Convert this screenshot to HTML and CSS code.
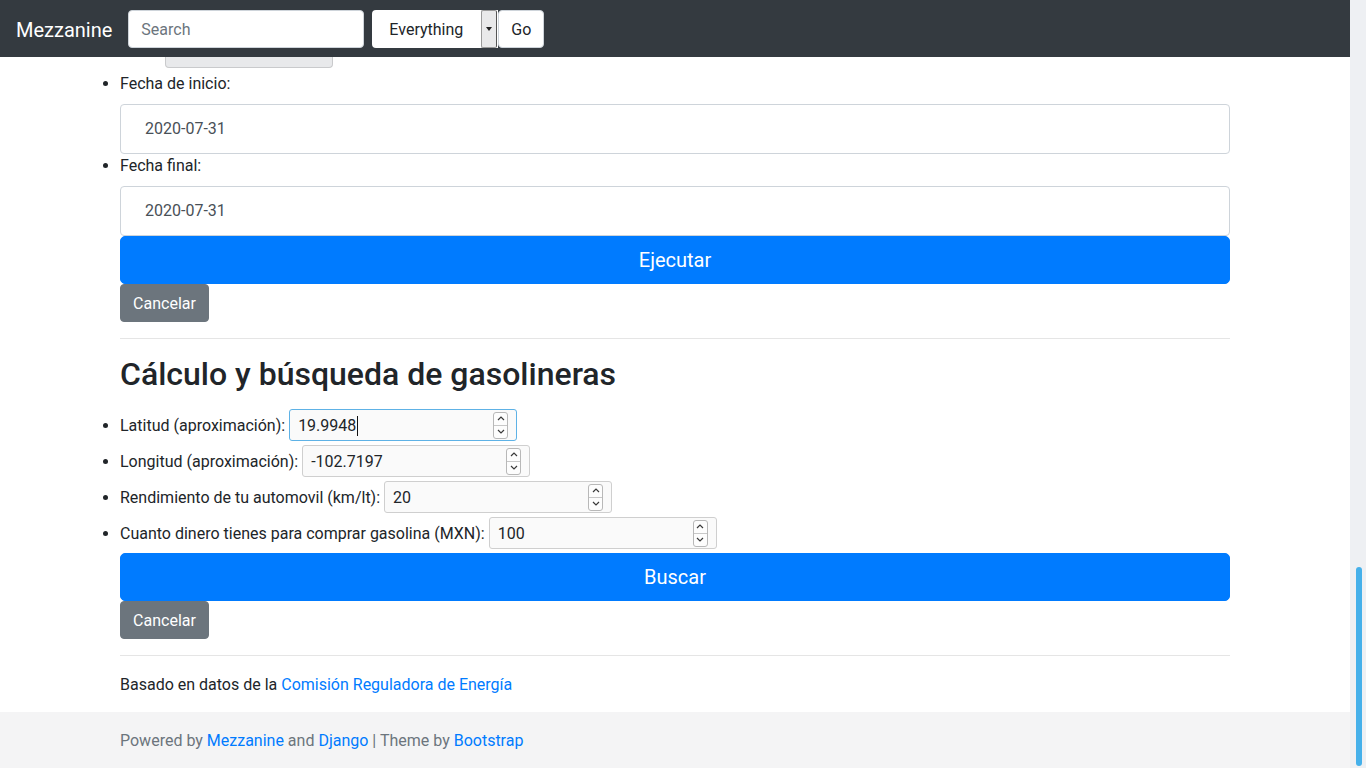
FILE: index.html
```html
<!DOCTYPE html>
<html lang="es">
<head>
<meta charset="utf-8">
<title>Mezzanine</title>
<link rel="stylesheet" href="styles.css">
</head>
<body>
<div class="viewport">
  <div class="main">
    <nav class="navbar">
      <span class="brand">Mezzanine</span>
      <input class="nav-search" type="text" placeholder="Search">
      <div class="nav-select">
        <span class="nav-select-text">Everything</span>
        <span class="nav-select-arrow"><svg width="6" height="4" viewBox="0 0 6 4"><path d="M0 0h6L3 4z" fill="#222"/></svg></span>
      </div>
      <button class="nav-go">Go</button>
    </nav>

    <div class="container">
      <div class="top-btn-row"><button class="btn-gray-partial"></button></div>

      <ul class="form-list dates">
        <li>
          <label class="lbl">Fecha de inicio:</label>
          <div class="date-input">2020-07-31</div>
        </li>
        <li>
          <label class="lbl">Fecha final:</label>
          <div class="date-input">2020-07-31</div>
        </li>
      </ul>
      <button class="btn btn-primary btn-lg">Ejecutar</button>
      <button class="btn btn-secondary">Cancelar</button>

      <hr>

      <h2>Cálculo y búsqueda de gasolineras</h2>

      <ul class="form-list numbers">
        <li>
          <div class="field">
            <span class="field-label">Latitud (aproximación):</span>
            <div class="num focused"><span class="num-val">19.9948<span class="caret"></span></span><span class="spin"><span class="spin-up"><svg width="8" height="5" viewBox="0 0 8 5"><path d="M1 4L4 1L7 4" fill="none" stroke="#3a3a3a" stroke-width="1.2"/></svg></span><span class="spin-down"><svg width="8" height="5" viewBox="0 0 8 5"><path d="M1 1L4 4L7 1" fill="none" stroke="#3a3a3a" stroke-width="1.2"/></svg></span></span></div>
          </div>
        </li>
        <li>
          <div class="field">
            <span class="field-label">Longitud (aproximación):</span>
            <div class="num"><span class="num-val">-102.7197</span><span class="spin"><span class="spin-up"><svg width="8" height="5" viewBox="0 0 8 5"><path d="M1 4L4 1L7 4" fill="none" stroke="#3a3a3a" stroke-width="1.2"/></svg></span><span class="spin-down"><svg width="8" height="5" viewBox="0 0 8 5"><path d="M1 1L4 4L7 1" fill="none" stroke="#3a3a3a" stroke-width="1.2"/></svg></span></span></div>
          </div>
        </li>
        <li>
          <div class="field">
            <span class="field-label">Rendimiento de tu automovil (km/lt):</span>
            <div class="num"><span class="num-val">20</span><span class="spin"><span class="spin-up"><svg width="8" height="5" viewBox="0 0 8 5"><path d="M1 4L4 1L7 4" fill="none" stroke="#3a3a3a" stroke-width="1.2"/></svg></span><span class="spin-down"><svg width="8" height="5" viewBox="0 0 8 5"><path d="M1 1L4 4L7 1" fill="none" stroke="#3a3a3a" stroke-width="1.2"/></svg></span></span></div>
          </div>
        </li>
        <li>
          <div class="field">
            <span class="field-label">Cuanto dinero tienes para comprar gasolina (MXN):</span>
            <div class="num"><span class="num-val">100</span><span class="spin"><span class="spin-up"><svg width="8" height="5" viewBox="0 0 8 5"><path d="M1 4L4 1L7 4" fill="none" stroke="#3a3a3a" stroke-width="1.2"/></svg></span><span class="spin-down"><svg width="8" height="5" viewBox="0 0 8 5"><path d="M1 1L4 4L7 1" fill="none" stroke="#3a3a3a" stroke-width="1.2"/></svg></span></span></div>
          </div>
        </li>
      </ul>
      <button class="btn btn-primary btn-lg buscar">Buscar</button>
      <button class="btn btn-secondary">Cancelar</button>

      <hr>

      <p class="source">Basado en datos de la <a href="#">Comisión Reguladora de Energía</a></p>
    </div>

    <footer class="footer">
      <div class="footer-inner">Powered by <a href="#">Mezzanine</a> and <a href="#">Django</a> | Theme by <a href="#">Bootstrap</a></div>
    </footer>
  </div>
  <div class="scrollbar"><div class="thumb"></div></div>
</div>
</body>
</html>
```

FILE: styles.css
```css
* { box-sizing: border-box; }
html, body {
  margin: 0;
  padding: 0;
  height: 768px;
  overflow: hidden;
}
body {
  font-family: Roboto, "Liberation Sans", Arial, sans-serif;
  font-size: 16px;
  line-height: 24px;
  color: #212529;
  background: #fff;
}
a { color: #007bff; text-decoration: none; }

.viewport {
  display: flex;
  height: 768px;
}
.main {
  flex: 1;
  position: relative;
  display: flex;
  flex-direction: column;
  overflow: hidden;
}

/* navbar */
.navbar {
  position: absolute;
  top: 0;
  left: 0;
  right: 0;
  height: 57px;
  background: #343a40;
  display: flex;
  align-items: center;
  padding: 0 16px;
  z-index: 10;
}
.brand {
  color: #fff;
  font-size: 20px;
  line-height: 30px;
  margin-right: 16px;
  margin-top: 3px;
}
.nav-search {
  width: 236px;
  height: 38px;
  border: 1px solid #ced4da;
  border-radius: 4px;
  padding: 2px 12px 0;
  font-family: inherit;
  font-size: 16px;
  color: #495057;
  background: #fff;
  outline: none;
}
.nav-search::placeholder { color: #6c757d; }
.nav-select {
  margin-left: 8px;
  width: 126px;
  height: 38px;
  background: #fff;
  border-radius: 4px 0 0 4px;
  display: flex;
  align-items: stretch;
  overflow: hidden;
}
.nav-select-text {
  flex: 1;
  padding-left: 17px;
  line-height: 40px;
  color: #212529;
}
.nav-select-arrow {
  width: 16px;
  background: #e9e9ea;
  border: 1px solid #9a9a9a;
  border-right-color: #555;
  border-radius: 2px;
  display: flex;
  align-items: center;
  justify-content: center;
  margin: 0 1px 0 0;
}
.nav-go {
  width: 46px;
  height: 38px;
  background: #fff;
  border: 1px solid #ced4da;
  border-radius: 4px;
  font-family: inherit;
  font-size: 16px;
  color: #212529;
  padding: 2px 0 0;
}

/* content */
.container {
  width: 1140px;
  margin: 0 auto;
  padding: 30px 15px 0;
}
.top-btn-row {
  padding-left: 45px;
  height: 38px;
}
.btn-gray-partial {
  display: block;
  width: 168px;
  height: 38px;
  background: #e8e9eb;
  border: 1px solid #c9cacc;
  border-top: none;
  border-radius: 0 0 4px 4px;
}

.form-list {
  margin: 0;
  padding: 0;
  list-style: disc outside;
}
.dates { margin-top: 4px; }
.lbl {
  display: block;
  height: 24px;
  margin-bottom: 8px;
}
.date-input {
  height: 50px;
  border: 1px solid #ced4da;
  border-radius: 4px;
  padding: 0 24px;
  line-height: 48px;
  color: #495057;
  background: #fff;
}

.btn {
  display: block;
  border: 1px solid transparent;
  font-family: inherit;
  color: #fff;
  cursor: pointer;
}
.btn-primary {
  background: #007bff;
  border-color: #007bff;
}
.btn-lg {
  width: 100%;
  height: 48px;
  font-size: 20px;
  border-radius: 5px;
  padding: 0 16px;
}
.btn-secondary {
  background: #6c757d;
  border-color: #6c757d;
  height: 38px;
  width: 89px;
  font-size: 16px;
  border-radius: 4px;
  padding: 0;
}

hr {
  margin: 16px 0;
  border: 0;
  border-top: 1px solid rgba(0, 0, 0, 0.1);
}

h2 {
  margin: 0 0 8px;
  font-size: 32px;
  line-height: 38px;
  font-weight: 500;
  color: #212529;
}

.numbers { margin-top: 14px; margin-bottom: 2px; }
.field {
  display: flex;
  align-items: center;
  height: 36px;
  gap: 4px;
}
.field-label {
  padding-top: 2px;
}
.num {
  width: 228px;
  height: 32px;
  border: 1px solid #cfcfcf;
  border-radius: 3px;
  background: #fafafa;
  display: flex;
  align-items: center;
  padding: 0 8px 0 8px;
}
.num.focused { border-color: #5eb2e6; }
.num-val {
  flex: 1;
  color: #212529;
  display: flex;
  align-items: center;
  padding-top: 1px;
}
.caret {
  display: inline-block;
  width: 1px;
  height: 20px;
  background: #111;
  margin-left: 1px;
}
.spin {
  display: flex;
  flex-direction: column;
  width: 15px;
  height: 27px;
  border: 1px solid #b8b8b8;
  border-radius: 3px;
  background: #fdfdfd;
}
.spin-up, .spin-down {
  flex: 1;
  display: flex;
  align-items: center;
  justify-content: center;
}
.spin-up { border-bottom: 1px solid #c8c8c8; }

.source {
  margin: 0 0 16px;
  padding-top: 1px;
  height: 24px;
}

.footer {
  margin-top: auto;
  height: 56px;
  background: #f4f4f5;
}
.footer-inner {
  width: 1140px;
  margin: 0 auto;
  padding: 17px 15px 15px;
  color: #6c757d;
}

.scrollbar {
  width: 16px;
  background: #eef0f3;
  display: flex;
  flex-direction: column;
  justify-content: flex-end;
  align-items: center;
  padding: 0 0 2px 0;
}
.thumb {
  width: 6px;
  height: 199px;
  background: #45b0ea;
  border-radius: 3px;
  margin-left: 1px;
}
```
